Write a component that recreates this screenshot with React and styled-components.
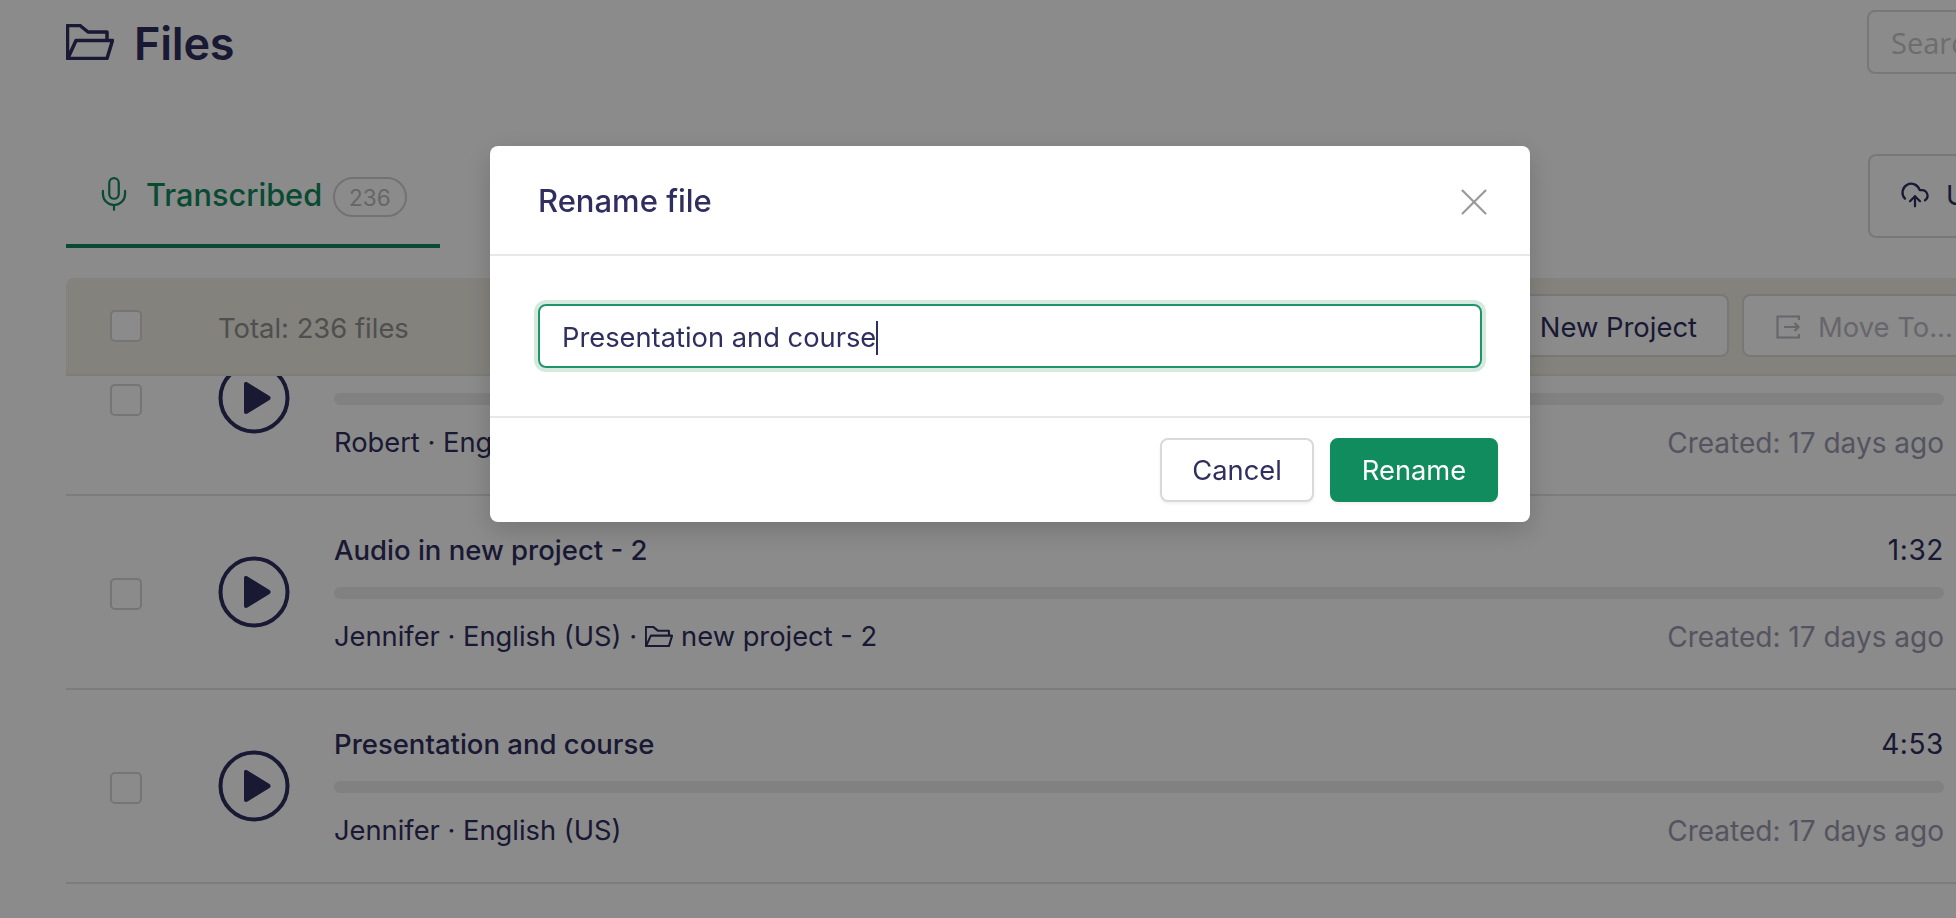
import React from 'react'
import styled, { createGlobalStyle } from 'styled-components'
import { Mic, X, CloudUpload } from 'lucide-react'

const GlobalStyle = createGlobalStyle`
html, body {
  margin: 0;
  height: 100%;
  overflow: hidden;
  background: #fff;
  font-family: Inter, "Liberation Sans", sans-serif;
  color: #2f2e5f;
}
* { box-sizing: border-box; }
svg { flex: none; }
`

const Page = styled.div`
width: 2100px;
height: 918px;
overflow: hidden;
`

const Header = styled.div`
display: flex;
align-items: center;
justify-content: space-between;
height: 84px;
padding-left: 66px;
`

const PageTitle = styled.h1`
display: flex;
align-items: center;
gap: 20px;
margin: 0;
font-size: 45px;
font-weight: 600;
line-height: 84px;
letter-spacing: -0.2px;
color: #2f2e5f;
`

const TitleText = styled.span`
padding-top: 3px;
`

const SearchBox = styled.div`
width: 233px;
height: 64px;
padding: 0 22px;
display: flex;
align-items: center;
border: 2px solid #dcdcdc;
border-radius: 8px;
font-family: "Open Sans", sans-serif;
font-size: 29px;
color: #c8c8c8;
white-space: nowrap;
`

const TabBar = styled.div`
display: flex;
align-items: flex-start;
justify-content: space-between;
height: 194px;
padding: 70px 0 0 66px;
`

const Tab = styled.div`
display: flex;
align-items: center;
gap: 13px;
width: 374px;
height: 94px;
padding: 0 0 10px 29px;
border-bottom: 4px solid #12885c;
color: #12885c;
font-size: 30.700px;
font-weight: 500;
`

const Badge = styled.span`
margin: 6px 0 0 -2px;
padding: 0 14px;
height: 40px;
display: flex;
align-items: center;
border: 2px solid #d2d2d2;
border-radius: 20px;
font-size: 22.500px;
font-weight: 400;
color: #bcbcbc;
`

const BarButton = styled.div`
display: flex;
align-items: center;
flex: none;
height: 63px;
padding: 2px 30px 0 32px;
border: 2px solid #dcdcdc;
border-radius: 8px;
background: #fff;
font-size: 27.400px;
font-weight: 400;
color: #2f2e5f;
white-space: nowrap;
`

const UploadButton = styled(BarButton)`
width: 232px;
height: 84px;
padding: 0 0 2px 30px;
gap: 16px;
`

const MoveButton = styled(BarButton)`
width: 230px;
gap: 18px;
color: #bcbcc6;
`

const Toolbar = styled.div`
display: flex;
align-items: center;
height: 98px;
margin-left: 66px;
padding-left: 44px;
background: #f1efe6;
border-bottom: 2px solid #e6e5df;
border-radius: 8px 8px 0 0;
position: relative;
z-index: 1;
`

const Check = styled.span`
flex: none;
width: 32px;
height: 32px;
border: 2px solid #d6d6d6;
border-radius: 5px;
background: #fff;
`

const RowCheck = styled(Check)`
margin-top: 3px;
`

const Total = styled.span`
flex: 1;
margin-left: 76px;
padding-top: 4px;
font-size: 27.400px;
color: #919191;
`

const ToolbarActions = styled.div`
display: flex;
gap: 13px;
margin: -1px 128px 0 0;
`

const List = styled.div`
margin: -74px 0 0 66px;
width: 1934px;
`

const Row = styled.div`
display: flex;
align-items: center;
height: 194px;
padding: 0 0 0 44px;
border-bottom: 2px solid #e4e4e4;
`

const PlayButton = styled.div`
flex: none;
display: flex;
width: 72px;
height: 72px;
margin: 0 44px 0 76px;
color: #2f2e5f;
`

const RowBody = styled.div`
width: 1610px;
margin-top: 2px;
`

const RowTop = styled.div`
display: flex;
justify-content: space-between;
font-size: 27.500px;
font-weight: 500;
line-height: 32px;
color: #2f2e5f;
`

const Duration = styled.span`
font-size: 28px;
font-weight: 400;
letter-spacing: 0.6px;
`

const Wave = styled.div`
height: 12px;
margin: 21px 0 22px;
border-radius: 6px;
background: #ececec;
`

const RowMeta = styled.div`
display: flex;
justify-content: space-between;
align-items: center;
font-size: 27.300px;
line-height: 32px;
color: #2f2e5f;
`

const MetaLeft = styled.span`
display: flex;
align-items: center;
gap: 8px;
`

const Created = styled.span`
font-size: 28px;
color: #9b9bb0;
`

const Overlay = styled.div`
position: fixed;
inset: 0;
z-index: 5;
background: rgba(0, 0, 0, 0.455);
`

const Dialog = styled.div`
position: fixed;
z-index: 6;
left: 490px;
top: 146px;
width: 1040px;
height: 376px;
display: flex;
flex-direction: column;
border-radius: 8px;
background: #fff;
box-shadow: 0 8px 28px rgba(0, 0, 0, 0.18);
`

const DialogHead = styled.div`
display: flex;
align-items: center;
justify-content: space-between;
height: 110px;
padding: 0 33px 0 48px;
border-bottom: 2px solid #e8e8e8;
`

const DialogTitle = styled.h2`
margin: 0;
font-size: 31px;
font-weight: 500;
color: #2f2e5f;
`

const CloseButton = styled.div`
display: flex;
margin-top: 4px;
color: #999;
`

const DialogBody = styled.div`
height: 162px;
padding: 48px 48px 0;
border-bottom: 2px solid #e8e8e8;
`

const NameField = styled.div`
height: 64px;
display: flex;
align-items: center;
padding: 3px 22px 0;
border: 2px solid #1f9466;
border-radius: 8px;
box-shadow: 0 0 0 4px #d5e9df;
font-size: 27.300px;
color: #2f2e5f;
`

const Caret = styled.span`
width: 2px;
height: 34px;
background: #2f2e5f;
`

const DialogFoot = styled.div`
flex: 1;
display: flex;
justify-content: flex-end;
align-items: flex-start;
gap: 16px;
padding: 20px 32px 0 0;
`

const FootButton = styled.div`
display: flex;
align-items: center;
justify-content: center;
width: ${props => props.$primary ? '168px' : '154px'};
height: 64px;
border-radius: 8px;
border: 2px solid ${props => props.$primary ? '#118c5f' : '#d9d9d9'};
background: ${props => props.$primary ? '#118c5f' : '#fff'};
color: ${props => props.$primary ? '#fff' : '#2f2e5f'};
font-size: 27.300px;
box-shadow: 0 2px 3px rgba(0, 0, 0, 0.06);
`

const FolderOpen = ({ size, weight }) => (
  <svg width={size} height={size * 0.75} viewBox="0 0 48 36" fill="none" stroke="currentColor" strokeWidth={weight} strokeLinejoin="round" strokeLinecap="round">
    <path d="M41 14V8H22L14 1.500H1.500V34.500H41L46.500 16.500H10L2 34" />
  </svg>
)

const MoveIcon = () => (
  <svg width="24" height="24" viewBox="0 0 24 24" fill="none" stroke="currentColor" strokeWidth="2.200">
    <path d="M23 5V1.500H1.500V22.500H23V19" />
    <path d="M8 12H22.500M18.500 8L22.500 12L18.500 16" />
  </svg>
)

const PlayIcon = () => (
  <svg width="72" height="72" viewBox="0 0 72 72">
    <circle cx="36" cy="36" r="33.500" fill="none" stroke="currentColor" strokeWidth="4" />
    <path d="M26 22C26 20 28 19.500 29.500 20.500L51.500 34C53 35.200 53 36.800 51.500 38L29.500 51.500C28 52.500 26 52 26 50Z" fill="currentColor" />
  </svg>
)

const files = [
  { name: 'Meeting recording', duration: '2:18', speaker: 'Robert · English (US)' },
  { name: 'Audio in new project - 2', duration: '1:32', speaker: 'Jennifer · English (US) ·', project: 'new project - 2' },
  { name: 'Presentation and course', duration: '4:53', speaker: 'Jennifer · English (US)' },
]

const App = () => {
  return (
    <Page>
      <GlobalStyle />
      <Header>
        <PageTitle><FolderOpen size={48} weight={3.500} /> <TitleText>Files</TitleText></PageTitle>
        <SearchBox>Search files</SearchBox>
      </Header>
      <TabBar>
        <Tab>
          <Mic size={38} strokeWidth={1.400} />
          <span>Transcribed</span>
          <Badge>236</Badge>
        </Tab>
        <UploadButton><CloudUpload size={30} strokeWidth={1.800} /> Upload</UploadButton>
      </TabBar>
      <Toolbar>
        <Check />
        <Total>Total: 236 files</Total>
        <ToolbarActions>
          <BarButton>New Project</BarButton>
          <MoveButton><MoveIcon /> Move To...</MoveButton>
        </ToolbarActions>
      </Toolbar>
      <List>
        {files.map(file => (
          <Row key={file.name}>
            <RowCheck />
            <PlayButton><PlayIcon /></PlayButton>
            <RowBody>
              <RowTop><span>{file.name}</span><Duration>{file.duration}</Duration></RowTop>
              <Wave />
              <RowMeta>
                <MetaLeft>
                  {file.speaker}
                  {file.project && <FolderOpen size={28} weight={3.500} />}
                  {file.project}
                </MetaLeft>
                <Created>Created: 17 days ago</Created>
              </RowMeta>
            </RowBody>
          </Row>
        ))}
      </List>
      <Overlay />
      <Dialog>
        <DialogHead>
          <DialogTitle>Rename file</DialogTitle>
          <CloseButton><X size={46} strokeWidth={1.100} /></CloseButton>
        </DialogHead>
        <DialogBody>
          <NameField>Presentation and course<Caret /></NameField>
        </DialogBody>
        <DialogFoot>
          <FootButton>Cancel</FootButton>
          <FootButton $primary>Rename</FootButton>
        </DialogFoot>
      </Dialog>
    </Page>
  )
}

export default App
